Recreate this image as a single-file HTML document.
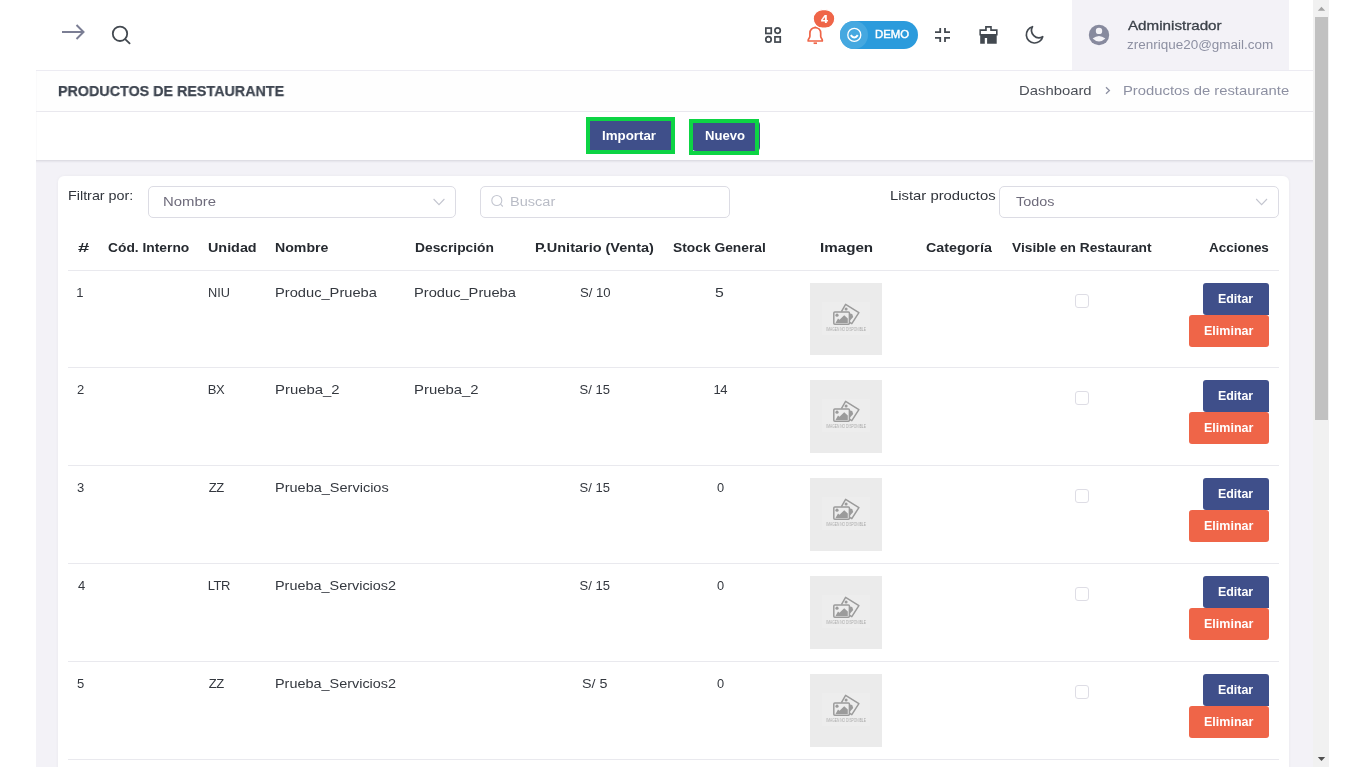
<!DOCTYPE html>
<html><head><meta charset="utf-8">
<style>
*{box-sizing:border-box;margin:0;padding:0}
html,body{width:1365px;height:767px;overflow:hidden;background:#fff;font-family:"Liberation Sans",sans-serif;color:#444b55}
.a{position:absolute}
.t{position:absolute;white-space:nowrap;line-height:1}
.r{font-size:13px;color:#4a4e56}
.n{letter-spacing:0.9px}
.c{text-align:center}
.img{position:absolute;left:810px;width:72px;height:72px;background:#ebebeb}
.img svg{display:block}
.chk{position:absolute;left:1075px;width:14px;height:14px;border:1px solid #dedde5;border-radius:3px;background:#fff}
.bed{position:absolute;left:1203px;width:66px;height:32px;background:#3f4f8a;border-radius:3px 3px 0 3px}
.bel{position:absolute;left:1189px;width:80px;height:32px;background:#ef6548;border-radius:3px}
.line{position:absolute;left:68px;width:1211px;height:1px;background:#e9e9ee}
.sel{position:absolute;height:32px;border:1px solid #dcdce4;border-radius:5px;background:#fff}
</style></head><body>
<svg width="0" height="0" style="position:absolute">
<defs>
<symbol id="ph" viewBox="0 0 72 72">
<rect x="12" y="19" width="48" height="33" fill="#ededed"/>
<g fill="none" stroke="#9b9b9b" stroke-width="1.5" stroke-linejoin="round">
<path d="M31.4 28.6 L35.6 21.3 L48.9 29.6 L41.8 40.6 L39.6 39.4"/>
<rect x="23.8" y="29.1" width="15.6" height="12.1" rx="1"/>
</g>
<g fill="#9b9b9b">
<circle cx="36.1" cy="26" r="1.5"/>
<circle cx="27" cy="32.2" r="1.6"/>
<path d="M25.5 40 L28 35.5 L29.5 36.8 L34.2 32.3 L37.8 35.5 L37.8 40 Z"/>
<path d="M40 30.5 L42.2 31 L43.2 34 L40 37.5 Z"/>
</g>
<text x="16.3" y="47.8" font-family="Liberation Sans" font-size="4.6" textLength="39.6" lengthAdjust="spacingAndGlyphs" fill="#acacac">IMAGEN NO DISPONIBLE</text>
</symbol>
</defs>
</svg>
<!-- gray main bg -->
<div class="a" style="left:36px;top:70px;width:1277px;height:697px;background:#f3f2f7"></div>
<!-- header -->
<div class="a" style="left:0;top:0;width:1313px;height:70px;background:#fff"></div>
<div class="a" style="left:1072px;top:0;width:217px;height:70px;background:#f3f2f7"></div>
<div class="a" style="left:36px;top:70px;width:1277px;height:1px;background:#ecebf2"></div>
<!-- title bar -->
<div class="a" style="left:36px;top:71px;width:1277px;height:40px;background:#fefefe;border-left:1px solid #fafafb"></div>
<div class="a" style="left:36px;top:111px;width:1277px;height:1px;background:#e9e8ee"></div>
<!-- button bar -->
<div class="a" style="left:36px;top:112px;width:1277px;height:48px;background:#fff;border-left:1px solid #fafafb"></div>
<div class="a" style="left:36px;top:160px;width:1277px;height:1px;background:#dedde4"></div>
<div class="a" style="left:36px;top:161px;width:1277px;height:1px;background:#e8e7ed"></div>
<div class="a" style="left:36px;top:162px;width:1277px;height:1px;background:#efeef4"></div>
<!-- card -->
<div class="a" style="left:58px;top:176px;width:1231px;height:640px;background:#fff;border-radius:6px;box-shadow:0 0 3px rgba(60,60,90,0.06)"></div>

<!-- header icons -->
<svg class="a" style="left:0;top:0" width="1313" height="70" viewBox="0 0 1313 70">
<g fill="none" stroke="#7b7e94" stroke-width="2" stroke-linecap="butt">
<path d="M62 32 H83.5"/><path d="M76.5 25 L83.5 32 L76.5 39"/>
</g>
<g fill="none" stroke="#434950" stroke-width="1.8" stroke-linecap="round">
<circle cx="120" cy="33.8" r="7.2"/><path d="M125.4 39.3 L129.6 43.4"/>
</g>
<g fill="none" stroke="#434950" stroke-width="1.7">
<rect x="765.85" y="28.05" width="5.4" height="5.4"/>
<rect x="774.95" y="36.85" width="5.3" height="5.2"/>
<circle cx="777.6" cy="30.6" r="2.7"/>
<circle cx="768.5" cy="39.4" r="2.7"/>
</g>
<g fill="none" stroke="#ef6548" stroke-width="1.7" stroke-linejoin="round">
<path d="M809.9 36.3 V33.2 C809.9 29.9 812.2 27.6 815.3 27.6 C818.4 27.6 820.7 29.9 820.7 33.2 V36.3 C820.7 37.9 822.3 38.9 822.3 40.1 V41 H808.2 V40.1 C808.2 38.9 809.9 37.9 809.9 36.3 Z"/>
<path d="M815.3 27.6 V26.6"/>
<path d="M813.6 43.2 H817"/>
</g>
<!-- badge -->
<rect x="813.2" y="9.6" width="21.6" height="18.4" rx="9.2" fill="#ef6548" stroke="#fff" stroke-width="1.2"/>
<!-- demo pill -->
<rect x="840" y="21" width="78" height="28" rx="14" fill="#2b9bdc"/>
<circle cx="854" cy="35" r="14" fill="#45a8e0"/>
<circle cx="854.3" cy="34.9" r="6.5" fill="none" stroke="#fff" stroke-width="1.3"/>
<path d="M850.8 35.2 Q854.3 40 857.8 35.2" fill="none" stroke="#fff" stroke-width="2"/>
<!-- compress -->
<g fill="none" stroke="#434950" stroke-width="1.8">
<path d="M935 32.1 H940.2 V27.9"/><path d="M945 27.9 V32.1 H950"/>
<path d="M935 37.9 H940.2 V42.1"/><path d="M945 42.1 V37.9 H950"/>
</g>
<!-- paint -->
<path fill="#434950" fill-rule="evenodd" d="M979.4 29.3 H985.1 V26.1 H991.8 V29.3 H997.6 V35.4 H979.4 Z M980.9 31 H986.8 V27.8 H990.2 V31 H996 V33.9 H980.9 Z"/>
<path fill="#434950" d="M980.2 35 H996.7 V43.7 H987.1 V38 H984.8 V43.7 H980.2 Z"/>
<!-- moon -->
<path d="M1042.7 36.7 A8.3 8.3 0 1 1 1032.5 26.7 A7.4 7.4 0 0 0 1042.7 36.7 Z" fill="none" stroke="#434950" stroke-width="1.7" stroke-linejoin="round"/>
<!-- user -->
<circle cx="1099" cy="35" r="10.2" fill="#878a9e"/>
<circle cx="1099" cy="30.9" r="3.2" fill="#f3f2f7"/>
<path d="M1092.6 38.6 Q1099 33.6 1105.4 38.6 Q1099 44.6 1092.6 38.6 Z" fill="#f3f2f7"/>
</svg>

<!-- breadcrumb chevron -->
<svg class="a" style="left:1100px;top:82px" width="16" height="16" viewBox="0 0 16 16"><path d="M6 5.2 L9.4 8.5 L6 11.8" fill="none" stroke="#8d90a2" stroke-width="1.3"/></svg>

<!-- buttons -->
<div class="a" style="left:590px;top:121px;width:81px;height:30px;background:#3f4f8a"></div>
<div class="a" style="left:692px;top:121px;width:68px;height:30px;background:#3f4f8a;border-radius:4px"></div>
<div class="a" style="left:586px;top:117px;width:89px;height:37px;border:4px solid #0dd444"></div>
<div class="a" style="left:689px;top:119px;width:70px;height:36px;border:4px solid #0dd444"></div>

<!-- filters -->
<div class="sel" style="left:148px;top:186px;width:308px"></div>
<div class="sel" style="left:480px;top:186px;width:250px"></div>
<div class="sel" style="left:999px;top:186px;width:280px"></div>
<svg class="a" style="left:0;top:180px" width="1300" height="40" viewBox="0 180 1300 40">
<path d="M433.6 199 L439 204.6 L444.4 199" fill="none" stroke="#c3c5cf" stroke-width="1.1"/>
<path d="M1256.2 199 L1261.6 204.6 L1267 199" fill="none" stroke="#c3c5cf" stroke-width="1.1"/>
<g fill="none" stroke="#c3c6d0" stroke-width="1.1"><circle cx="496.8" cy="200.5" r="5"/><path d="M500.5 204.2 L502.8 206.5"/></g>
</svg>

<!-- table header line -->
<div class="line" style="top:270px"></div>
<div style="position:absolute;left:0;top:0;width:1313px;height:767px;will-change:transform">
<div class="img" style="top:283px;height:72px"><svg width="72" height="72" viewBox="0 0 72 72"><use href="#ph"/></svg></div>
<div class="chk" style="top:294px"></div>
<div class="bed" style="top:283px"></div>
<div class="bel" style="top:315px"></div>
<div class="line" style="top:367px"></div>
<div class="img" style="top:380px;height:73px"><svg width="72" height="72" viewBox="0 0 72 72"><use href="#ph"/></svg></div>
<div class="chk" style="top:391px"></div>
<div class="bed" style="top:380px"></div>
<div class="bel" style="top:412px"></div>
<div class="line" style="top:465px"></div>
<div class="img" style="top:478px;height:73px"><svg width="72" height="72" viewBox="0 0 72 72"><use href="#ph"/></svg></div>
<div class="chk" style="top:489px"></div>
<div class="bed" style="top:478px"></div>
<div class="bel" style="top:510px"></div>
<div class="line" style="top:563px"></div>
<div class="img" style="top:576px;height:73px"><svg width="72" height="72" viewBox="0 0 72 72"><use href="#ph"/></svg></div>
<div class="chk" style="top:587px"></div>
<div class="bed" style="top:576px"></div>
<div class="bel" style="top:608px"></div>
<div class="line" style="top:661px"></div>
<div class="img" style="top:674px;height:73px"><svg width="72" height="72" viewBox="0 0 72 72"><use href="#ph"/></svg></div>
<div class="chk" style="top:685px"></div>
<div class="bed" style="top:674px"></div>
<div class="bel" style="top:706px"></div>
<div class="line" style="top:759px"></div>

<div class="t" style="left:1127.6px;top:19px;font-size:13.19px;font-weight:400;color:#3b4149;letter-spacing:0px;-webkit-text-stroke:0.3px #3b4149;transform:scaleX(1.1506);transform-origin:0 0">Administrador</div>
<div class="t" style="left:1127.3px;top:39px;font-size:12.3px;font-weight:400;color:#8d90a2;letter-spacing:0px;transform:scaleX(1.0955);transform-origin:0 0">zrenrique20@gmail.com</div>
<div class="t" style="left:875.11px;top:29px;font-size:11.52px;font-weight:400;color:#ffffff;letter-spacing:0px;-webkit-text-stroke:0.45px #ffffff;transform:scaleX(0.9879);transform-origin:0 0">DEMO</div>
<div class="t" style="left:821.0px;top:14px;font-size:10.58px;font-weight:700;color:#ffffff;letter-spacing:0px;-webkit-text-stroke:0.2px #ffffff;transform:scaleX(1.1667);transform-origin:0 0">4</div>
<div class="t" style="left:57.85px;top:83px;font-size:15px;font-weight:700;color:#3e4550;letter-spacing:0px;-webkit-text-stroke:0.25px #3e4550;transform:scaleX(0.9542);transform-origin:0 0">PRODUCTOS DE RESTAURANTE</div>
<div class="t" style="left:1019.33px;top:85px;font-size:12.74px;font-weight:400;color:#4b4f57;letter-spacing:0px;transform:scaleX(1.1656);transform-origin:0 0">Dashboard</div>
<div class="t" style="left:1122.54px;top:85px;font-size:12.74px;font-weight:400;color:#8d90a2;letter-spacing:0px;transform:scaleX(1.162);transform-origin:0 0">Productos de restaurante</div>
<div class="t" style="left:601.92px;top:130px;font-size:12.32px;font-weight:700;color:#ffffff;letter-spacing:0px;transform:scaleX(1.0816);transform-origin:0 0">Importar</div>
<div class="t" style="left:704.94px;top:130px;font-size:12.32px;font-weight:700;color:#ffffff;letter-spacing:0px;transform:scaleX(1.0639);transform-origin:0 0">Nuevo</div>
<div class="t" style="left:67.59px;top:190px;font-size:12.9px;font-weight:400;color:#30343b;letter-spacing:0px;transform:scaleX(1.1123);transform-origin:0 0">Filtrar por:</div>
<div class="t" style="left:162.83px;top:196px;font-size:12.75px;font-weight:400;color:#6e6b7b;letter-spacing:0px;transform:scaleX(1.1682);transform-origin:0 0">Nombre</div>
<div class="t" style="left:510.25px;top:196px;font-size:12.68px;font-weight:400;color:#b9bcc6;letter-spacing:0px;transform:scaleX(1.1474);transform-origin:0 0">Buscar</div>
<div class="t" style="left:890.45px;top:190px;font-size:12.9px;font-weight:400;color:#30343b;letter-spacing:0px;transform:scaleX(1.1511);transform-origin:0 0">Listar productos</div>
<div class="t" style="left:1015.9px;top:196px;font-size:12.75px;font-weight:400;color:#6e6b7b;letter-spacing:0px;transform:scaleX(1.1265);transform-origin:0 0">Todos</div>
<div class="t" style="left:77.7px;top:241px;font-size:13.19px;font-weight:700;color:#262a30;letter-spacing:0px;transform:scaleX(1.5286);transform-origin:0 0">#</div>
<div class="t" style="left:108.4px;top:241px;font-size:13.19px;font-weight:700;color:#262a30;letter-spacing:0px;transform:scaleX(1.0468);transform-origin:0 0">Cód. Interno</div>
<div class="t" style="left:207.81px;top:241px;font-size:13.19px;font-weight:700;color:#262a30;letter-spacing:0px;transform:scaleX(1.0884);transform-origin:0 0">Unidad</div>
<div class="t" style="left:274.93px;top:241px;font-size:13.19px;font-weight:700;color:#262a30;letter-spacing:0px;transform:scaleX(1.0714);transform-origin:0 0">Nombre</div>
<div class="t" style="left:414.55px;top:241px;font-size:13.19px;font-weight:700;color:#262a30;letter-spacing:0px;transform:scaleX(1.0459);transform-origin:0 0">Descripción</div>
<div class="t" style="left:535.0px;top:241px;font-size:13.19px;font-weight:700;color:#262a30;letter-spacing:0px;transform:scaleX(1.0981);transform-origin:0 0">P.Unitario (Venta)</div>
<div class="t" style="left:673.45px;top:241px;font-size:13.19px;font-weight:700;color:#262a30;letter-spacing:0px;transform:scaleX(1.046);transform-origin:0 0">Stock General</div>
<div class="t" style="left:819.55px;top:241px;font-size:13.19px;font-weight:700;color:#262a30;letter-spacing:0px;transform:scaleX(1.15);transform-origin:0 0">Imagen</div>
<div class="t" style="left:926.3px;top:241px;font-size:13.19px;font-weight:700;color:#262a30;letter-spacing:0px;transform:scaleX(1.082);transform-origin:0 0">Categoría</div>
<div class="t" style="left:1012.3px;top:241px;font-size:13.19px;font-weight:700;color:#262a30;letter-spacing:0px;transform:scaleX(1.0425);transform-origin:0 0">Visible en Restaurant</div>
<div class="t" style="left:1209.4px;top:241px;font-size:13.19px;font-weight:700;color:#262a30;letter-spacing:0px;transform:scaleX(1.0207);transform-origin:0 0">Acciones</div>
<div class="t" style="left:76.2px;top:286px;font-size:13px;font-weight:400;color:#34383f;letter-spacing:0px;transform:scaleX(1.0);transform-origin:0 0">1</div>
<div class="t" style="left:207.82px;top:286px;font-size:13px;font-weight:400;color:#34383f;letter-spacing:0px;transform:scaleX(0.981);transform-origin:0 0">NIU</div>
<div class="t" style="left:274.67px;top:286px;font-size:13px;font-weight:400;color:#34383f;letter-spacing:0px;transform:scaleX(1.1281);transform-origin:0 0">Produc_Prueba</div>
<div class="t" style="left:414.27px;top:286px;font-size:13px;font-weight:400;color:#34383f;letter-spacing:0px;transform:scaleX(1.1281);transform-origin:0 0">Produc_Prueba</div>
<div class="t" style="left:579.59px;top:286px;font-size:13px;font-weight:400;color:#34383f;letter-spacing:0px;transform:scaleX(1.0103);transform-origin:0 0">S/ 10</div>
<div class="t" style="left:715.08px;top:286px;font-size:13px;font-weight:400;color:#34383f;letter-spacing:0px;transform:scaleX(1.2167);transform-origin:0 0">5</div>
<div class="t" style="left:76.9px;top:383px;font-size:13px;font-weight:400;color:#34383f;letter-spacing:0px;transform:scaleX(1.0);transform-origin:0 0">2</div>
<div class="t" style="left:207.8px;top:383px;font-size:13px;font-weight:400;color:#34383f;letter-spacing:-0.5px">BX</div>
<div class="t" style="left:274.65px;top:383px;font-size:13px;font-weight:400;color:#34383f;letter-spacing:0px;transform:scaleX(1.1455);transform-origin:0 0">Prueba_2</div>
<div class="t" style="left:414.25px;top:383px;font-size:13px;font-weight:400;color:#34383f;letter-spacing:0px;transform:scaleX(1.1455);transform-origin:0 0">Prueba_2</div>
<div class="t" style="left:579.6px;top:383px;font-size:13px;font-weight:400;color:#34383f;letter-spacing:0px;transform:scaleX(1.0);transform-origin:0 0">S/ 15</div>
<div class="t" style="left:713.5px;top:383px;font-size:13px;font-weight:400;color:#34383f;letter-spacing:-0.5px">14</div>
<div class="t" style="left:76.9px;top:481px;font-size:13px;font-weight:400;color:#34383f;letter-spacing:0px;transform:scaleX(1.0);transform-origin:0 0">3</div>
<div class="t" style="left:208.8px;top:481px;font-size:13px;font-weight:400;color:#34383f;letter-spacing:-0.5px">ZZ</div>
<div class="t" style="left:274.68px;top:481px;font-size:13px;font-weight:400;color:#34383f;letter-spacing:0px;transform:scaleX(1.1158);transform-origin:0 0">Prueba_Servicios</div>
<div class="t" style="left:579.6px;top:481px;font-size:13px;font-weight:400;color:#34383f;letter-spacing:0px;transform:scaleX(1.0);transform-origin:0 0">S/ 15</div>
<div class="t" style="left:716.5px;top:481px;font-size:13px;font-weight:400;color:#34383f;letter-spacing:0px;transform:scaleX(0.9857);transform-origin:0 0">0</div>
<div class="t" style="left:77.9px;top:579px;font-size:13px;font-weight:400;color:#34383f;letter-spacing:0px;transform:scaleX(1.0);transform-origin:0 0">4</div>
<div class="t" style="left:207.8px;top:579px;font-size:13px;font-weight:400;color:#34383f;letter-spacing:-0.5px">LTR</div>
<div class="t" style="left:274.69px;top:579px;font-size:13px;font-weight:400;color:#34383f;letter-spacing:0px;transform:scaleX(1.1093);transform-origin:0 0">Prueba_Servicios2</div>
<div class="t" style="left:579.6px;top:579px;font-size:13px;font-weight:400;color:#34383f;letter-spacing:0px;transform:scaleX(1.0);transform-origin:0 0">S/ 15</div>
<div class="t" style="left:716.5px;top:579px;font-size:13px;font-weight:400;color:#34383f;letter-spacing:0px;transform:scaleX(0.9857);transform-origin:0 0">0</div>
<div class="t" style="left:76.9px;top:677px;font-size:13px;font-weight:400;color:#34383f;letter-spacing:0px;transform:scaleX(1.0);transform-origin:0 0">5</div>
<div class="t" style="left:208.8px;top:677px;font-size:13px;font-weight:400;color:#34383f;letter-spacing:-0.5px">ZZ</div>
<div class="t" style="left:274.69px;top:677px;font-size:13px;font-weight:400;color:#34383f;letter-spacing:0px;transform:scaleX(1.1093);transform-origin:0 0">Prueba_Servicios2</div>
<div class="t" style="left:582.3px;top:677px;font-size:13px;font-weight:400;color:#34383f;letter-spacing:0px;transform:scaleX(1.1);transform-origin:0 0">S/ 5</div>
<div class="t" style="left:716.5px;top:677px;font-size:13px;font-weight:400;color:#34383f;letter-spacing:0px;transform:scaleX(0.9857);transform-origin:0 0">0</div>
<div class="t" style="left:1217.82px;top:293px;font-size:12.61px;font-weight:700;color:#ffffff;letter-spacing:0px;transform:scaleX(0.9829);transform-origin:0 0">Editar</div>
<div class="t" style="left:1204.0px;top:325px;font-size:12.46px;font-weight:700;color:#ffffff;letter-spacing:0px;transform:scaleX(1.0042);transform-origin:0 0">Eliminar</div>
<div class="t" style="left:1217.82px;top:390px;font-size:12.61px;font-weight:700;color:#ffffff;letter-spacing:0px;transform:scaleX(0.9829);transform-origin:0 0">Editar</div>
<div class="t" style="left:1204.0px;top:422px;font-size:12.46px;font-weight:700;color:#ffffff;letter-spacing:0px;transform:scaleX(1.0042);transform-origin:0 0">Eliminar</div>
<div class="t" style="left:1217.82px;top:488px;font-size:12.61px;font-weight:700;color:#ffffff;letter-spacing:0px;transform:scaleX(0.9829);transform-origin:0 0">Editar</div>
<div class="t" style="left:1204.0px;top:520px;font-size:12.46px;font-weight:700;color:#ffffff;letter-spacing:0px;transform:scaleX(1.0042);transform-origin:0 0">Eliminar</div>
<div class="t" style="left:1217.82px;top:586px;font-size:12.61px;font-weight:700;color:#ffffff;letter-spacing:0px;transform:scaleX(0.9829);transform-origin:0 0">Editar</div>
<div class="t" style="left:1204.0px;top:618px;font-size:12.46px;font-weight:700;color:#ffffff;letter-spacing:0px;transform:scaleX(1.0042);transform-origin:0 0">Eliminar</div>
<div class="t" style="left:1217.82px;top:684px;font-size:12.61px;font-weight:700;color:#ffffff;letter-spacing:0px;transform:scaleX(0.9829);transform-origin:0 0">Editar</div>
<div class="t" style="left:1204.0px;top:716px;font-size:12.46px;font-weight:700;color:#ffffff;letter-spacing:0px;transform:scaleX(1.0042);transform-origin:0 0">Eliminar</div>

</div>

<!-- scrollbar -->
<div class="a" style="left:1313px;top:0;width:16px;height:767px;background:#f1f1f1"></div>
<div class="a" style="left:1315px;top:17px;width:13px;height:403px;background:#c1c1c1"></div>
<svg class="a" style="left:1313px;top:0" width="16" height="767" viewBox="0 0 16 767">
<path d="M4.8 10.8 L8.5 6.7 L12.2 10.8 Z" fill="#a3a3a3"/>
<path d="M4.8 757 L8.5 761 L12.2 757 Z" fill="#505050"/>
</svg>
<div class="a" style="left:1329px;top:0;width:36px;height:767px;background:#fff"></div>
</body></html>
